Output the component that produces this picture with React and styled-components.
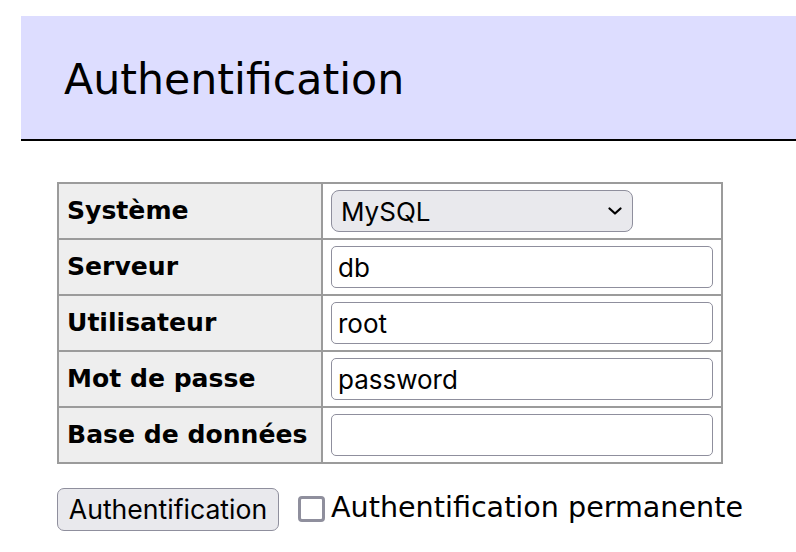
import React from 'react'
import styled, { createGlobalStyle } from 'styled-components'

const GlobalStyle = createGlobalStyle`
  body {
    margin: 0;
    background: #fff;
    font-family: "DejaVu Sans", Verdana, sans-serif;
    color: #000;
  }
`

const Page = styled.div`
  padding: 16px 0 0 21px;
`

const Header = styled.h1`
  margin: 0;
  box-sizing: border-box;
  height: 125px;
  padding: 42px 0 0 43px;
  background: #ddddff;
  border-bottom: 2px solid #000;
  font-size: 42.7px;
  line-height: 42.5px;
  font-weight: normal;
`

const Content = styled.div`
  padding-left: 36px;
`

const FormGrid = styled.div`
  display: grid;
  grid-template-columns: 262px 398px;
  grid-auto-rows: 54px;
  gap: 2px;
  padding: 2px;
  margin-top: 41px;
  width: max-content;
  background: #9b9b9b;
`

const LabelCell = styled.div`
  display: flex;
  align-items: center;
  padding: 0 0 2px 8px;
  background: #eeeeee;
  font-weight: bold;
  font-size: 25.1px;
  white-space: nowrap;
`

const FieldCell = styled.div`
  display: flex;
  align-items: center;
  padding-left: 8px;
  background: #fff;
`

const TextInput = styled.input`
  box-sizing: border-box;
  width: 382px;
  height: 42px;
  padding: 0 6px;
  border: 1.6px solid #8f8f9d;
  border-radius: 5px;
  background: #fff;
  font-family: Inter, "Liberation Sans", sans-serif;
  font-size: 26px;
  color: #000;
  outline: none;
`

const SelectWrap = styled.div`
  position: relative;
  width: 302px;
  height: 42px;
`

const Select = styled.select`
  appearance: none;
  box-sizing: border-box;
  width: 100%;
  height: 100%;
  padding: 0 30px 0 9px;
  border: 1.6px solid #8f8f9d;
  border-radius: 8px;
  background: #e9e9ed;
  font-family: Inter, "Liberation Sans", sans-serif;
  font-size: 26px;
  color: #000;
  outline: none;
`

const Chevron = styled.svg`
  position: absolute;
  right: 11px;
  top: 17px;
  pointer-events: none;
`

const Actions = styled.div`
  display: flex;
  align-items: center;
  margin-top: 24px;
`

const Button = styled.button`
  box-sizing: border-box;
  width: 222px;
  height: 42.5px;
  padding: 0;
  border: 1.6px solid #8f8f9d;
  border-radius: 7px;
  background: #e9e9ed;
  font-family: Inter, "Liberation Sans", sans-serif;
  font-size: 26.6px;
  color: #000;
`

const CheckLabel = styled.label`
  display: flex;
  align-items: center;
  gap: 6px;
  margin-left: 19px;
  padding-bottom: 4px;
  font-size: 28.6px;
`

const Box = styled.span`
  box-sizing: border-box;
  width: 27px;
  height: 26px;
  margin-top: 4px;
  border: 3px solid #8f8f9d;
  border-radius: 4px;
  background: #fff;
`

const fields = [
  { label: 'Serveur', value: 'db' },
  { label: 'Utilisateur', value: 'root' },
  { label: 'Mot de passe', value: 'password' },
  { label: 'Base de données', value: '' },
]

export default function App() {
  return (
    <Page>
      <GlobalStyle />
      <Header>Authentification</Header>
      <Content>
        <FormGrid>
          <LabelCell>Système</LabelCell>
          <FieldCell>
            <SelectWrap>
              <Select defaultValue="server">
                <option value="server">MySQL</option>
              </Select>
              <Chevron width="14" height="8" viewBox="0 0 14 8">
                <path d="M1.5 1.5 L7 6.5 L12.5 1.5" fill="none" stroke="#000" strokeWidth="2.2" strokeLinecap="round" strokeLinejoin="round" />
              </Chevron>
            </SelectWrap>
          </FieldCell>
          {fields.map((f) => (
            <React.Fragment key={f.label}>
              <LabelCell>{f.label}</LabelCell>
              <FieldCell>
                <TextInput type="text" defaultValue={f.value} />
              </FieldCell>
            </React.Fragment>
          ))}
        </FormGrid>
        <Actions>
          <Button type="button">Authentification</Button>
          <CheckLabel>
            <Box />
            Authentification permanente
          </CheckLabel>
        </Actions>
      </Content>
    </Page>
  )
}
